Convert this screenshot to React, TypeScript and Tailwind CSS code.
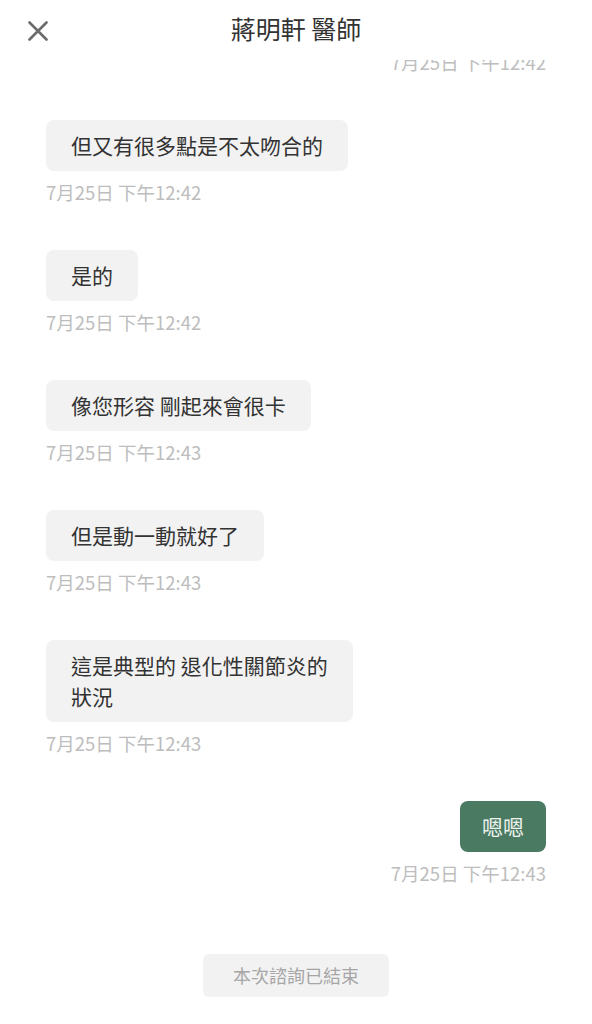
const font = { fontFamily: '"Noto Sans CJK TC", "Noto Sans", sans-serif' }

interface Message {
  id: number
  text: string[]
  time: string
  mine?: boolean
}

const messages: Message[] = [
  { id: 1, text: ['但又有很多點是不太吻合的'], time: '7月25日 下午12:42' },
  { id: 2, text: ['是的'], time: '7月25日 下午12:42' },
  { id: 3, text: ['像您形容 剛起來會很卡'], time: '7月25日 下午12:43' },
  { id: 4, text: ['但是動一動就好了'], time: '7月25日 下午12:43' },
  { id: 5, text: ['這是典型的 退化性關節炎的', '狀況'], time: '7月25日 下午12:43' },
  { id: 6, text: ['嗯嗯'], time: '7月25日 下午12:43', mine: true },
]

function CloseIcon() {
  return (
    <svg viewBox="0 0 20 20" className="size-[20px] text-[#6b6b6b]" fill="none">
      <path d="M1.5 1.5L18.5 18.5M18.5 1.5L1.5 18.5" stroke="currentColor" strokeWidth="2.6" strokeLinecap="round" />
    </svg>
  )
}

function Bubble({ message }: { message: Message }) {
  return (
    <div className={message.mine ? 'flex flex-col items-end' : 'flex flex-col items-start'}>
      <div
        className={
          message.mine
            ? 'rounded-[8px] bg-[#4a7b62] px-[22px] py-[10px] text-[21px] leading-[31px] text-[#eef3ef]'
            : 'rounded-[8px] bg-[#f2f2f2] px-[25px] py-[10px] text-[21px] leading-[31px] text-[#333333]'
        }
      >
        {message.text.map(line => (
          <div key={line}>{line}</div>
        ))}
      </div>
      <div className="mt-[8px] text-[18.5px] leading-[26px] text-[#bdbdbd]">{message.time}</div>
    </div>
  )
}

export default function App() {
  return (
    <div style={font} className="flex h-[1024px] w-[592px] flex-col overflow-hidden bg-white">
      <header className="relative z-10 flex h-[60px] shrink-0 items-center justify-center bg-white">
        <button className="absolute left-[28px] top-[21px]">
          <CloseIcon />
        </button>
        <h1 className="-mt-[4px] text-[25px] leading-[32px] text-[#333333]">蔣明軒 醫師</h1>
      </header>

      <main className="flex-1 overflow-hidden px-[46px]">
        <div className="-mt-[11px] flex flex-col gap-[45px]">
          <div className="flex justify-end text-[18.5px] leading-[26px] text-[#bdbdbd]">7月25日 下午12:42</div>
          {messages.map(message => (
            <Bubble key={message.id} message={message} />
          ))}
        </div>
      </main>

      <footer className="flex shrink-0 justify-center pb-[27px]">
        <div className="flex h-[43px] w-[186px] items-center justify-center rounded-[6px] bg-[#f2f2f2] text-[18px] text-[#a6a6a6]">
          本次諮詢已結束
        </div>
      </footer>
    </div>
  )
}
